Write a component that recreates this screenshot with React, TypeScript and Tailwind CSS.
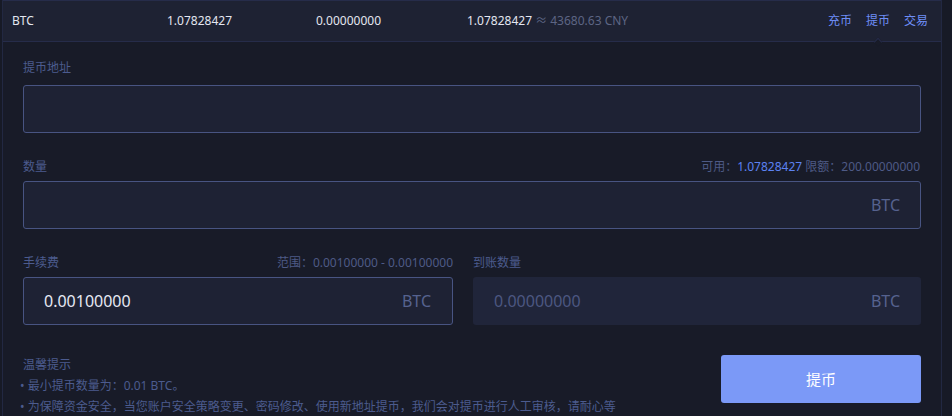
const font = { fontFamily: '"Noto Sans", "Noto Sans CJK SC", sans-serif' };

function Label({ children }: { children: React.ReactNode }) {
  return <div className="text-[12px] leading-[16px] text-[#4c5b8e]">{children}</div>;
}

export default function App() {
  return (
    <div className="w-[952px] h-[416px] overflow-hidden bg-[#171a26]" style={font}>
      <div className="ml-[2px] w-[940px] h-[416px] bg-[#181b28] border-l border-r border-[#222842]">
        {/* header row */}
        <div className="relative flex items-center h-[42px] bg-[#1e2233] border-t border-b border-[#262c4a] pl-[9px] pr-[13px] text-[12px] text-[#e3e6f0]">
          <div className="w-[155px]">BTC</div>
          <div className="w-[149px]">1.07828427</div>
          <div className="w-[151px]">0.00000000</div>
          <div>
            1.07828427 <span className="text-[#5d6584]">≈ 43680.63 CNY</span>
          </div>
          <div className="ml-auto flex gap-[14px] text-[#6e8ef7]">
            <span>充币</span>
            <span>提币</span>
            <span>交易</span>
          </div>
          <span className="absolute right-[60px] bottom-[-4px] w-[6px] h-[6px] rotate-45 bg-[#181b28] border-l border-t border-[#262c4a]" />
        </div>

        {/* form */}
        <div className="pl-[20px] pr-[20px]">
          <div className="pt-[18px]">
            <Label>提币地址</Label>
            <div className="mt-[9px] h-[48px] rounded-[3px] border border-[#485482] bg-[#1e2234]" />
          </div>

          <div className="pt-[26px]">
            <div className="flex items-end justify-between">
              <Label>数量</Label>
              <div className="text-[12px] leading-[16px] text-[#4e5a86] pr-[1px]">
                可用：<span className="text-[#5c82f2]">1.07828427</span> 限额：200.00000000
              </div>
            </div>
            <div className="mt-[6px] h-[48px] rounded-[3px] border border-[#485482] bg-[#1e2234] flex items-center justify-end pr-[20px] text-[16px] text-[#56628f]">
              BTC
            </div>
          </div>

          <div className="pt-[26px] flex gap-[20px]">
            <div className="w-[430px]">
              <div className="flex items-end justify-between">
                <Label>手续费</Label>
                <div className="text-[12px] leading-[16px] text-[#4e5a86]">范围：0.00100000 - 0.00100000</div>
              </div>
              <div className="mt-[6px] h-[48px] rounded-[3px] border border-[#485482] bg-[#1e2234] flex items-center justify-between pl-[20px] pr-[21px]">
                <span className="text-[16px] text-[#e6e9f3]">0.00100000</span>
                <span className="text-[16px] text-[#56628f]">BTC</span>
              </div>
            </div>
            <div className="flex-1">
              <Label>到账数量</Label>
              <div className="mt-[6px] h-[48px] rounded-[3px] bg-[#20253a] flex items-center justify-between pl-[21px] pr-[21px]">
                <span className="text-[16px] text-[#4c5781]">0.00000000</span>
                <span className="text-[16px] text-[#56628f]">BTC</span>
              </div>
            </div>
          </div>

          <div className="pt-[30px] flex justify-between">
            <div className="text-[12px] leading-[21px] text-[#4c5b8e] -ml-[3px] -mt-[1px]">
              <div className="pl-[3px]">温馨提示</div>
              <div>• 最小提币数量为：0.01 BTC。</div>
              <div>• 为保障资金安全，当您账户安全策略变更、密码修改、使用新地址提币，我们会对提币进行人工审核，请耐心等</div>
            </div>
            <button className="w-[200px] h-[48px] rounded-[3px] bg-[#7b99f7] text-white text-[15px]">提币</button>
          </div>
        </div>
      </div>
    </div>
  );
}
